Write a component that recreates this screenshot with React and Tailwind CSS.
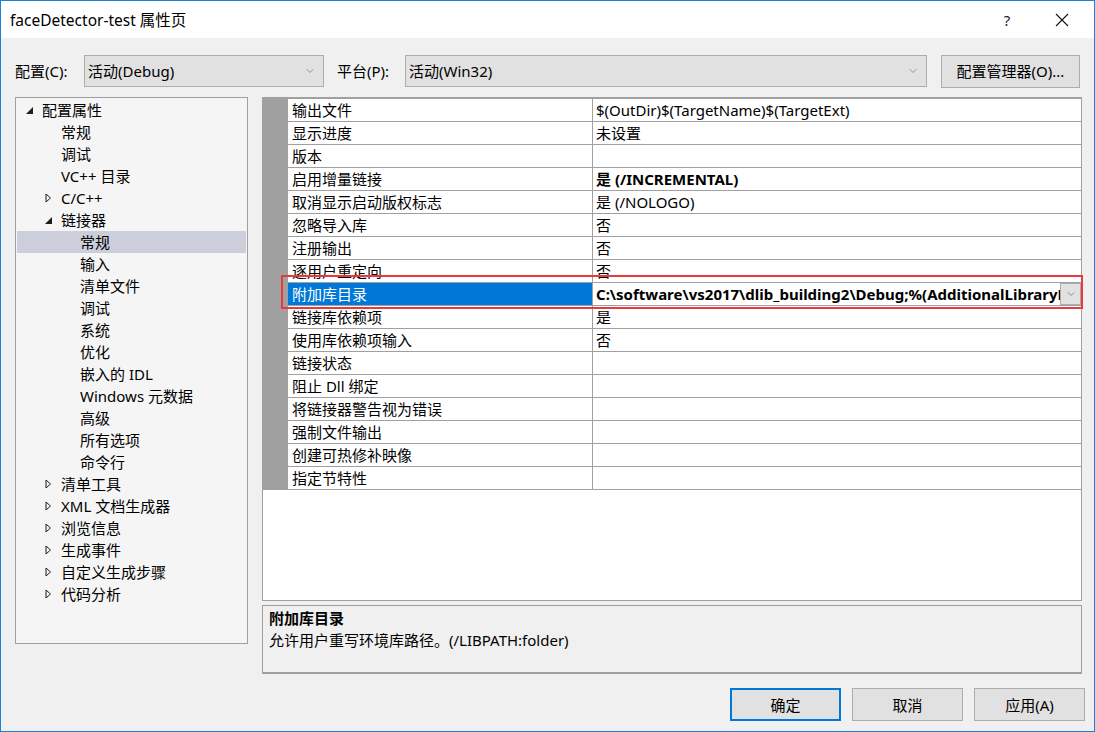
import { ChevronDown } from 'lucide-react';

const TREE = [
  { label: '配置属性', level: 0, arrow: 'open' },
  { label: '常规', level: 1 },
  { label: '调试', level: 1 },
  { label: 'VC++ 目录', level: 1 },
  { label: 'C/C++', level: 1, arrow: 'closed' },
  { label: '链接器', level: 1, arrow: 'open' },
  { label: '常规', level: 2, selected: true },
  { label: '输入', level: 2 },
  { label: '清单文件', level: 2 },
  { label: '调试', level: 2 },
  { label: '系统', level: 2 },
  { label: '优化', level: 2 },
  { label: '嵌入的 IDL', level: 2 },
  { label: 'Windows 元数据', level: 2 },
  { label: '高级', level: 2 },
  { label: '所有选项', level: 2 },
  { label: '命令行', level: 2 },
  { label: '清单工具', level: 1, arrow: 'closed' },
  { label: 'XML 文档生成器', level: 1, arrow: 'closed' },
  { label: '浏览信息', level: 1, arrow: 'closed' },
  { label: '生成事件', level: 1, arrow: 'closed' },
  { label: '自定义生成步骤', level: 1, arrow: 'closed' },
  { label: '代码分析', level: 1, arrow: 'closed' },
];

const ROWS = [
  { name: '输出文件', value: '$(OutDir)$(TargetName)$(TargetExt)' },
  { name: '显示进度', value: '未设置' },
  { name: '版本', value: '' },
  { name: '启用增量链接', value: '是 (/INCREMENTAL)', bold: true },
  { name: '取消显示启动版权标志', value: '是 (/NOLOGO)' },
  { name: '忽略导入库', value: '否' },
  { name: '注册输出', value: '否' },
  { name: '逐用户重定向', value: '否' },
  { name: '附加库目录', value: 'C:\\software\\vs2017\\dlib_building2\\Debug;%(AdditionalLibraryDirectories)', bold: true, selected: true },
  { name: '链接库依赖项', value: '是' },
  { name: '使用库依赖项输入', value: '否' },
  { name: '链接状态', value: '' },
  { name: '阻止 Dll 绑定', value: '' },
  { name: '将链接器警告视为错误', value: '' },
  { name: '强制文件输出', value: '' },
  { name: '创建可热修补映像', value: '' },
  { name: '指定节特性', value: '' },
];

function Arrow({ kind }) {
  if (kind === 'open') {
    return (
      <svg width="9" height="9" viewBox="0 0 9 9" className="ml-[2px] mt-[1px]">
        <path d="M1 8 L8 8 L8 1 Z" fill="#1e1e1e" />
      </svg>
    );
  }
  return (
    <svg width="7" height="10" viewBox="0 0 7 10" className="ml-[3px]">
      <path d="M1 1 L5.5 5 L1 9 Z" fill="none" stroke="#1e1e1e" strokeWidth="1" />
    </svg>
  );
}

function Combo({ text, width }) {
  return (
    <div className={`${width} h-[32px] bg-[#e1e1e1] border border-[#adadad] flex items-center pl-[3px] pr-[7px]`}>
      <span className="flex-1">{text}</span>
      <ChevronDown size={12} strokeWidth={1.2} className="text-[#5a5a5a]" />
    </div>
  );
}

function Button({ children, primary }) {
  return (
    <button className={`w-[111px] h-[33px] bg-[#e1e1e1] flex items-center justify-center ${primary ? 'border-2 border-[#0078d7]' : 'border border-[#adadad]'}`}>
      {children}
    </button>
  );
}

export default function App() {
  return (
    <div
      className="w-[1095px] h-[732px] border border-[#1883d7] bg-[#f0f0f0] flex flex-col text-[15px] leading-[22px] text-black overflow-hidden"
      style={{ fontFamily: '"Noto Sans", "Noto Sans CJK SC", sans-serif' }}
    >
      {/* Title bar */}
      <div className="h-[37px] bg-white flex items-center pl-[9px] shrink-0">
        <span className="flex-1 text-[15.5px]">faceDetector-test 属性页</span>
        <span className="w-[20px] text-center mr-[38px] text-[#222]">?</span>
        <svg width="14" height="14" viewBox="0 0 14 14" className="mr-[25px]">
          <path d="M1 1 L13 13 M13 1 L1 13" stroke="#111" strokeWidth="1.1" />
        </svg>
      </div>

      {/* Config row */}
      <div className="flex items-center mt-[17px] pl-[14px] h-[32px] shrink-0">
        <span className="w-[69px]">配置(C):</span>
        <Combo text="活动(Debug)" width="w-[240px]" />
        <span className="w-[68px] ml-[13px]">平台(P):</span>
        <Combo text="活动(Win32)" width="w-[522px]" />
        <button className="ml-[14px] w-[139px] h-[33px] bg-[#e1e1e1] border border-[#adadad] flex items-center justify-center">
          配置管理器(O)...
        </button>
      </div>

      {/* Main */}
      <div className="flex mt-[10px] pl-[14px]">
        {/* Tree */}
        <div className="w-[233px] h-[547px] bg-[#f5f5f5] border border-[#a0a0a0] pt-[1px] px-[1px]">
          {TREE.map((item, i) => (
            <div
              key={i}
              className={`h-[22px] flex items-center whitespace-nowrap ${item.selected ? 'bg-[#cccedb]' : ''}`}
              style={{ paddingLeft: 6 + item.level * 19 }}
            >
              <div className="w-[19px] flex items-center">{item.arrow && <Arrow kind={item.arrow} />}</div>
              <span>{item.label}</span>
            </div>
          ))}
        </div>

        {/* Right column */}
        <div className="ml-[14px] flex flex-col">
          <div className="relative w-[820px] h-[504px] bg-white border border-t-2 border-[#a0a0a0]">
            <div className="flex">
              <div className="w-[25px] h-[391px] bg-[#a0a0a0] shrink-0" />
              <div className="flex-1 min-w-0">
                {ROWS.map((row, i) => (
                  <div key={i} className="h-[23px] flex border-b border-[#a0a0a0]">
                    <div
                      className={`w-[305px] shrink-0 pl-[4px] border-r border-[#a0a0a0] whitespace-nowrap ${row.selected ? 'bg-[#0078d7] text-white' : ''}`}
                    >
                      {row.name}
                    </div>
                    <div className={`flex-1 flex min-w-0 ${row.bold ? 'font-bold' : ''}`}>
                      <div className="flex-1 min-w-0 pl-[3px] whitespace-nowrap overflow-hidden">{row.value}</div>
                      {row.selected && (
                        <div className="w-[21px] h-[22px] shrink-0 bg-[#e1e1e1] border border-[#adadad] flex items-center justify-center">
                          <ChevronDown size={12} strokeWidth={1.2} className="text-[#5a5a5a]" />
                        </div>
                      )}
                    </div>
                  </div>
                ))}
              </div>
            </div>
            {/* red highlight annotation */}
            <div className="absolute left-[18px] top-[176px] w-[802px] h-[34px] border-2 border-[#e8393c] pointer-events-none" />
          </div>

          <div className="mt-[4px] w-[820px] h-[69px] border border-b-2 border-[#a0a0a0] pl-[6px] pt-[1px]">
            <div className="font-bold">附加库目录</div>
            <div>允许用户重写环境库路径。(/LIBPATH:folder)</div>
          </div>
        </div>
      </div>

      {/* Buttons */}
      <div className="flex justify-end gap-[11px] mt-[14px] pr-[9px]">
        <Button primary>确定</Button>
        <Button>取消</Button>
        <Button>应用(A)</Button>
      </div>
    </div>
  );
}
